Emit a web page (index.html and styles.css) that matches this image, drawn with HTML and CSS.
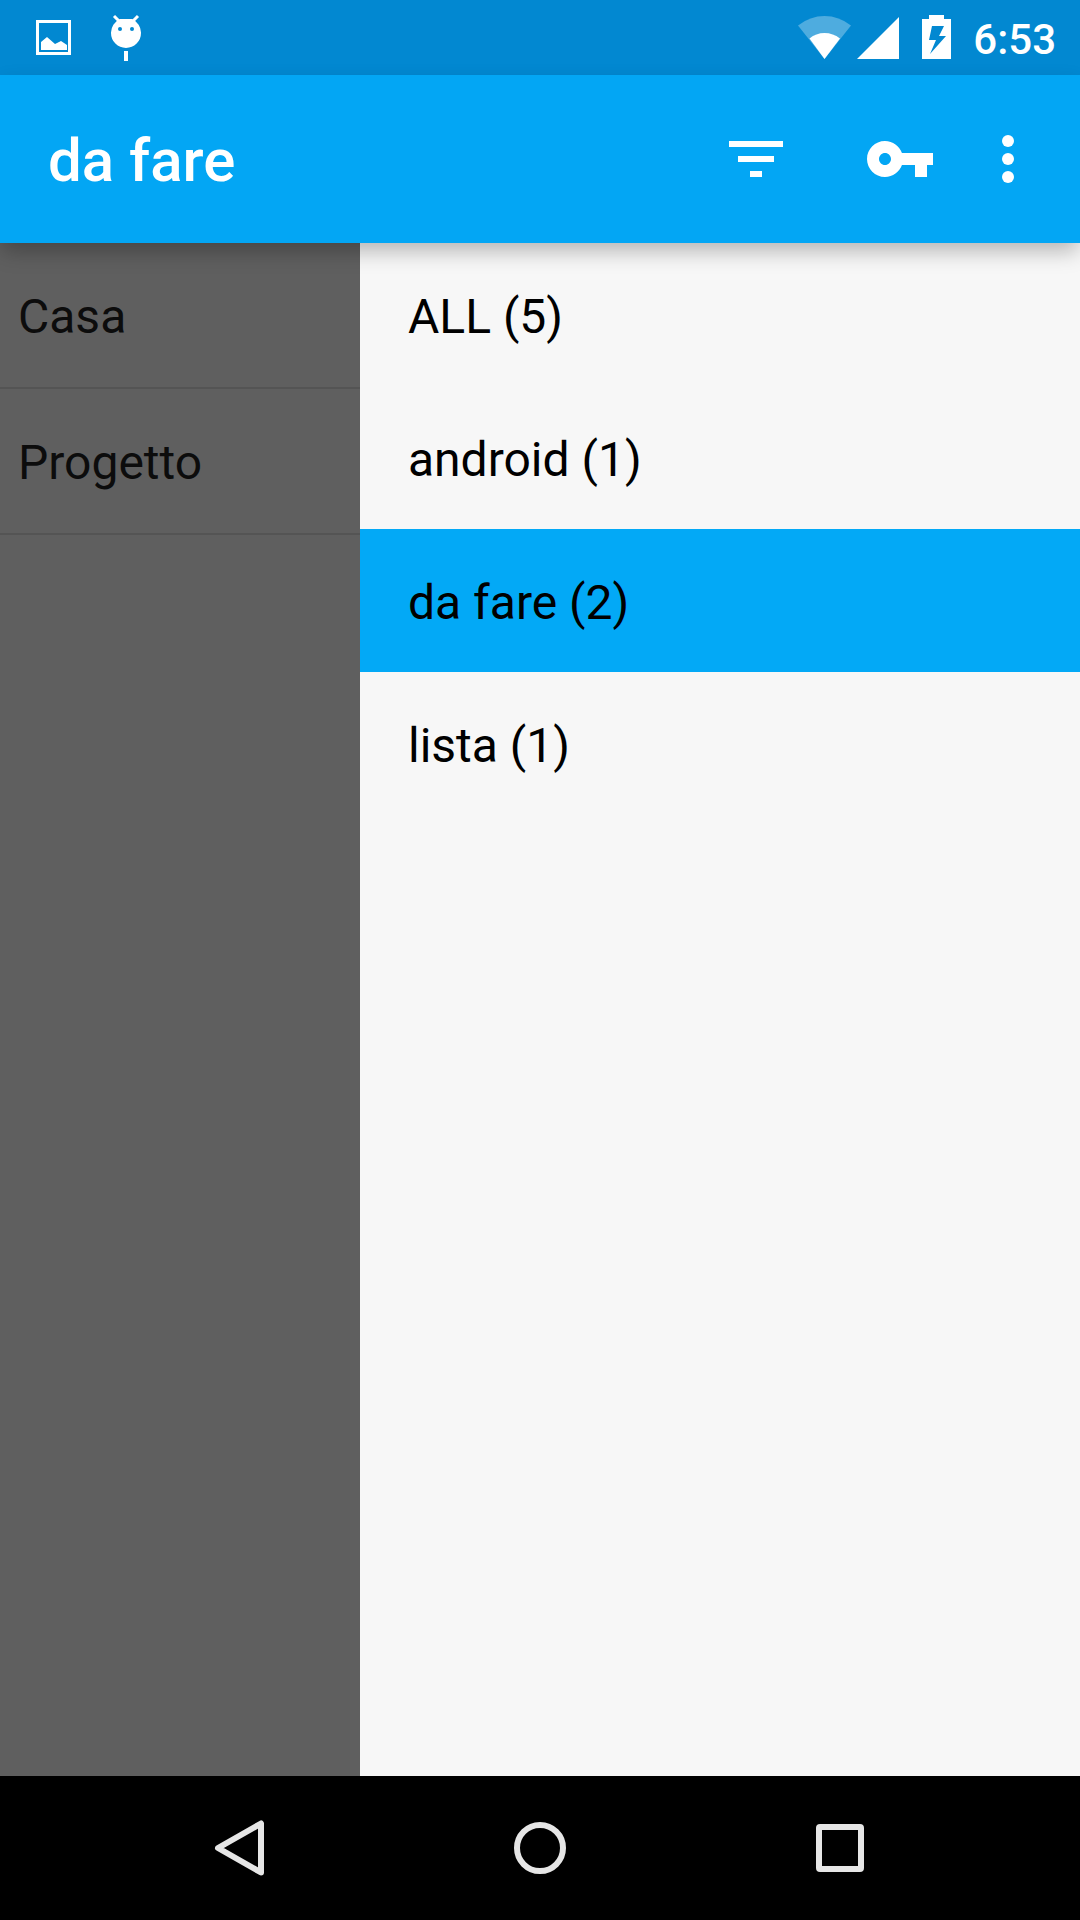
FILE: index.html
```html
<!DOCTYPE html>
<html lang="it">
<head>
<meta charset="utf-8">
<meta name="viewport" content="width=device-width, initial-scale=1">
<title>da fare</title>
<link rel="stylesheet" href="styles.css">
</head>
<body>
<div class="status-bar">
  <div class="notifications">
    <svg width="36" height="75" viewBox="0 0 36 75" fill="#fff" aria-hidden="true">
      <path fill-rule="evenodd" d="M0 20h35v35H0zM3 23v29h29V23z"/>
      <path d="M5 42l6-5 8 7 6-3 6 4v5H5z"/>
    </svg>
    <svg width="30" height="75" viewBox="0 0 30 75" fill="#fff" aria-hidden="true">
      <path d="M3 16l6 6M27 16l-6 6" stroke="#fff" stroke-width="3"/>
      <path d="M9 19h12a15 15 0 0 1 9 14a15 15 0 0 1-30 0a15 15 0 0 1 9-14z"/>
      <path d="M13 51h4v10h-4z"/>
      <circle class="droid-eye" cx="9" cy="29" r="2"/>
      <circle class="droid-eye" cx="21" cy="29" r="2"/>
    </svg>
  </div>
  <div class="indicators">
    <svg width="102" height="75" viewBox="0 0 102 75" fill="#fff" aria-hidden="true">
      <path fill-opacity=".3" d="M0 25.500Q12 16 26.500 16T53 25.500L26.500 59z"/>
      <path d="M11.500 38.500Q18 33 26.500 33T42 38.500L26.500 59z"/>
      <path d="M59 59L101 17v42z"/>
    </svg>
    <svg width="29" height="75" viewBox="0 0 29 75" fill="#fff" aria-hidden="true">
      <path fill-rule="evenodd" d="M7 15h15v4h7v40H0V19h7zM10 26L7 40h7l-6 14 16-18h-7l5-10z"/>
    </svg>
    <time class="clock">6:53</time>
  </div>
</div>

<header class="toolbar">
  <h1 class="title">da fare</h1>
  <button class="action" type="button" aria-label="Filter">
    <svg width="72" height="72" viewBox="0 0 24 24" fill="#fff"><path d="M10 18h4v-2h-4v2zM3 6v2h18V6H3zm3 7h12v-2H6v2z"/></svg>
  </button>
  <button class="action" type="button" aria-label="Password">
    <svg width="72" height="72" viewBox="0 0 24 24" fill="#fff"><path d="M12.650 10C11.830 7.670 9.610 6 7 6c-3.310 0-6 2.690-6 6s2.690 6 6 6c2.610 0 4.830-1.670 5.650-4H17v4h4v-4h2v-4H12.650zM7 14c-1.100 0-2-.9-2-2s.9-2 2-2 2 .9 2 2-.9 2-2 2z"/></svg>
  </button>
  <button class="action action-more" type="button" aria-label="More options">
    <svg width="72" height="72" viewBox="0 0 24 24" fill="#fff"><circle cx="12" cy="6" r="2"/><circle cx="12" cy="12" r="2"/><circle cx="12" cy="18" r="2"/></svg>
  </button>
</header>

<main class="content">
  <ul class="notes">
    <li class="note">Casa</li>
    <li class="note">Progetto</li>
  </ul>
  <nav class="drawer" aria-label="Categories">
    <a class="category" href="#all">ALL (5)</a>
    <a class="category" href="#android">android (1)</a>
    <a class="category selected" href="#da-fare" aria-current="page">da fare (2)</a>
    <a class="category" href="#lista">lista (1)</a>
  </nav>
</main>

<footer class="nav-bar">
  <button class="nav-button" type="button" aria-label="Back">
    <svg width="60" height="60" viewBox="0 0 60 60"><path d="M8 30L51 5.500v49z"/></svg>
  </button>
  <button class="nav-button" type="button" aria-label="Home">
    <svg width="60" height="60" viewBox="0 0 60 60"><circle cx="30" cy="30" r="23"/></svg>
  </button>
  <button class="nav-button" type="button" aria-label="Recent apps">
    <svg width="60" height="60" viewBox="0 0 60 60"><rect x="9" y="9" width="42" height="42" rx="1"/></svg>
  </button>
</footer>
</body>
</html>
```

FILE: styles.css
```css
* {
  box-sizing: border-box;
}

body {
  display: flex;
  flex-direction: column;
  min-height: 100vh;
  margin: 0;
  font-family: Roboto, sans-serif;
  font-size: 48px;
  color: #000;
  background: #f7f7f7;
}

svg {
  display: block;
}

button {
  display: flex;
  align-items: center;
  justify-content: center;
  padding: 0;
  border: 0;
  background: none;
}

.status-bar {
  display: flex;
  justify-content: space-between;
  height: 75px;
  padding: 0 24px 0 36px;
  background: #0288d1;
}

.notifications {
  display: flex;
  gap: 39px;
}

.droid-eye {
  fill: #0288d1;
}

.indicators {
  display: flex;
  gap: 22px;
}

.clock {
  font-size: 42px;
  font-weight: 500;
  line-height: 80px;
  color: #fff;
}

.toolbar {
  position: relative;
  z-index: 1;
  display: flex;
  align-items: center;
  height: 168px;
  padding: 0 36px 0 48px;
  background: #03a6f4;
  box-shadow: 0 10px 20px -2px rgba(0, 0, 0, 0.27);
}

.title {
  flex: 1;
  margin: 0;
  padding-top: 4px;
  font-size: 60px;
  font-weight: 500;
  line-height: 72px;
  color: #fff;
}

.action {
  width: 144px;
  height: 144px;
}

.action-more {
  width: 72px;
}

.content {
  display: flex;
  flex: 1;
}

.notes {
  flex: 1;
  margin: 0;
  padding: 0;
  list-style: none;
  background: #5f5f5f;
}

.note {
  padding: 4px 18px 0;
  border-bottom: 2px solid #545454;
  line-height: 140px;
  color: #0c0c0c;
}

.drawer {
  flex: 2;
  background: #f7f7f7;
}

.category {
  display: block;
  padding: 4px 48px 0;
  line-height: 139px;
  color: #000;
  text-decoration: none;
}

.selected {
  background: #03a9f6;
}

.nav-bar {
  display: flex;
  justify-content: center;
  height: 144px;
  padding: 0 90px;
  background: #000;
}

.nav-button {
  flex: 1;
}

.nav-button svg {
  fill: none;
  stroke: #e6e6e6;
  stroke-width: 6px;
  stroke-linejoin: round;
}
```
